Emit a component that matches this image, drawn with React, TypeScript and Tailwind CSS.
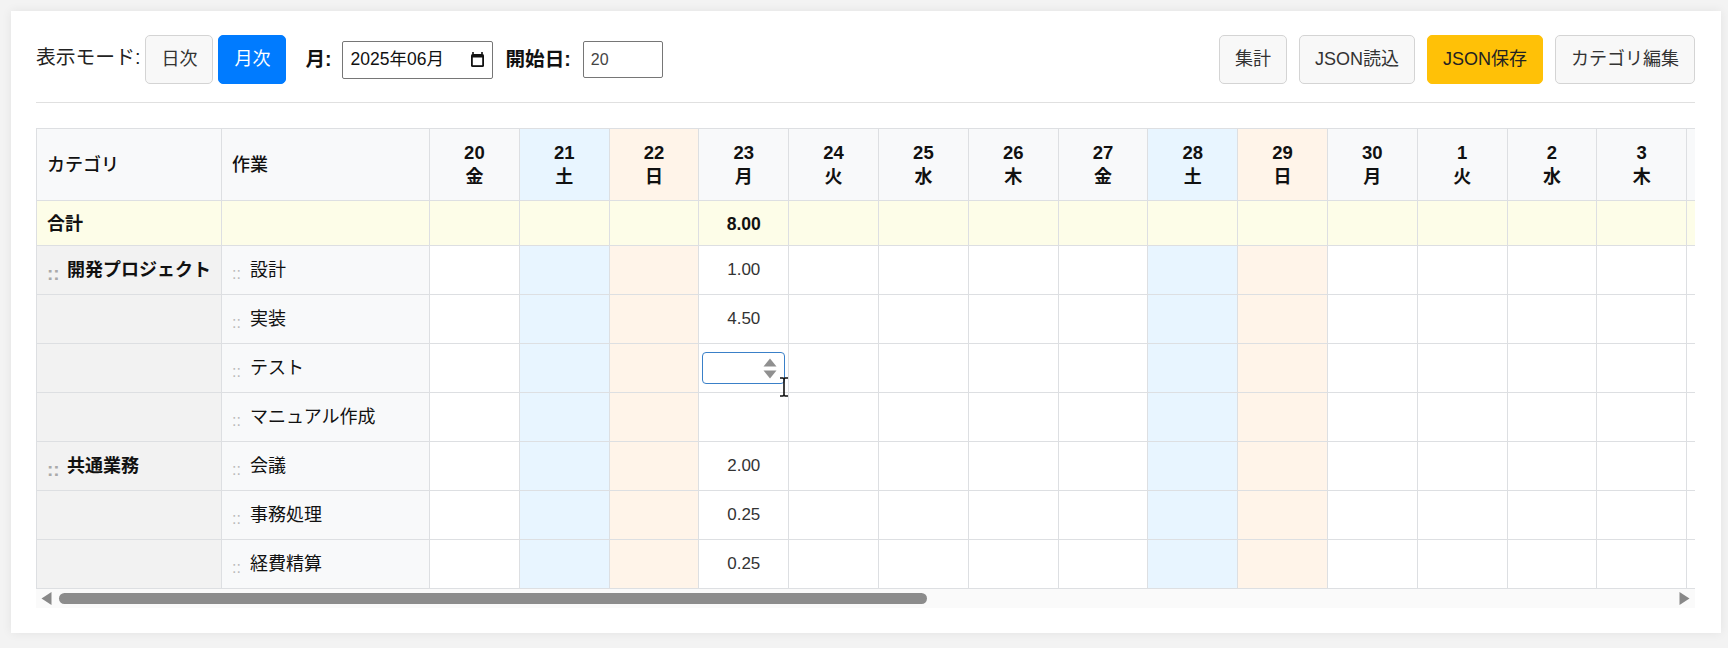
import React from "react";

const days: [number | null, string][] = [
  [20, "金"], [21, "土"], [22, "日"], [23, "月"], [24, "火"], [25, "水"], [26, "木"], [27, "金"], [28, "土"], [29, "日"], [30, "月"],
  [1, "火"], [2, "水"], [3, "木"], [null, ""],
];

const rows: { cat?: string; task: string; val?: string; focus?: boolean }[] = [
  { cat: "開発プロジェクト", task: "設計", val: "1.00" },
  { task: "実装", val: "4.50" },
  { task: "テスト", focus: true },
  { task: "マニュアル作成" },
  { cat: "共通業務", task: "会議", val: "2.00" },
  { task: "事務処理", val: "0.25" },
  { task: "経費精算", val: "0.25" },
];

const cellBase = "border border-[#dddfe2] p-0";

function dayBg(d: string, fallback: string) {
  if (d === "土") return "bg-[#e8f5ff]";
  if (d === "日") return "bg-[#fff4e9]";
  return fallback;
}

function Btn({ children, kind = "plain" }: { children: React.ReactNode; kind?: "plain" | "blue" | "yellow" }) {
  const look =
    kind === "blue"
      ? "bg-[#007bff] text-white border-[#007bff]"
      : kind === "yellow"
        ? "bg-[#ffc107] text-[#222] border-[#ffc107]"
        : "bg-[#f8f8f8] text-[#333] border-[#d4d4d4]";
  return (
    <button className={`h-[49px] px-[15px] border rounded-[5px] text-[18px] whitespace-nowrap ${look}`}>{children}</button>
  );
}

function CalendarIcon() {
  return (
    <svg width="15" height="17" viewBox="0 0 15 17" className="block">
      <path d="M3 1v2M12 1v2" stroke="#111" strokeWidth="1.6" />
      <rect x="1" y="3" width="13" height="13" rx="1.5" fill="#111" />
      <rect x="2.8" y="6.5" width="9.4" height="7.7" fill="#fff" />
    </svg>
  );
}

function Spinner() {
  return (
    <svg width="14" height="21" viewBox="0 0 14 21" className="block">
      <path d="M7 0.5 L13.5 8.5 H0.5 Z M0.5 12.5 H13.5 L7 20.5 Z" fill="#909090" />
    </svg>
  );
}

function IBeam() {
  return (
    <svg width="10" height="20" viewBox="0 0 10 20" className="absolute left-[80px] top-[33px] z-10">
      <path d="M1 1h3l1 1 1-1h3M5 2v16M1 19h3l1-1 1 1h3" stroke="#111" strokeWidth="1.6" fill="none" />
    </svg>
  );
}

export default function App() {
  return (
    <div className="min-h-[648px] bg-[#f3f3f3] pt-[11px] pb-[15px] pl-[11px] pr-[7px] font-['Liberation_Sans','Noto_Sans_CJK_JP',sans-serif] text-[18px] text-[#111]">
      <div className="bg-white pt-[24px] pb-[25px] pl-[25px] pr-[26px] shadow-[0_0_10px_rgba(0,0,0,0.07)]">
        <div className="flex items-center justify-between pb-[18px] border-b border-[#e0e0e0]">
          <div className="flex items-center">
            <span className="mr-[5px] -mt-[4px] text-[19.8px] text-[#222]">表示モード:</span>
            <div className="flex gap-[5px]">
              <Btn>日次</Btn>
              <Btn kind="blue">月次</Btn>
            </div>
            <label className="ml-[19px] mr-[10px] text-[19.6px] font-bold">月:</label>
            <div className="flex h-[38px] w-[151px] items-center justify-between rounded-[2px] border border-[#767676] pl-[8px] pr-[7px] text-[17.5px]">
              <span>2025年06月</span>
              <CalendarIcon />
            </div>
            <label className="ml-[13px] mr-[12px] text-[19.6px] font-bold">開始日:</label>
            <input
              type="number"
              readOnly
              value="20"
              className="h-[37px] w-[80px] rounded-[2px] border border-[#767676] px-[7px] text-[16px] text-[#444]"
            />
          </div>
          <div className="flex items-center gap-[12px]">
            <Btn>集計</Btn>
            <Btn>JSON読込</Btn>
            <Btn kind="yellow">JSON保存</Btn>
            <Btn>カテゴリ編集</Btn>
          </div>
        </div>

        <div className="mt-[25px] overflow-hidden">
          <table className="table-fixed w-[1740px] border-collapse">
            <colgroup>
              <col className="w-[185px]" />
              <col className="w-[208px]" />
              {days.map((_, i) => (
                <col key={i} className="w-[89.8px]" />
              ))}
            </colgroup>
            <thead>
              <tr className="h-[72px]">
                <th className={`${cellBase} bg-[#f8f9fa] pl-[10px] pt-[2px] text-left font-medium`}>カテゴリ</th>
                <th className={`${cellBase} bg-[#f8f9fa] pl-[10px] pt-[2px] text-left font-medium`}>作業</th>
                {days.map(([n, d], i) => (
                  <th key={i} className={`${cellBase} ${dayBg(d, "bg-[#f8f9fa]")} pt-[1px] text-center text-[18.5px] font-bold leading-[25px]`}>
                    {n !== null && <div>{n}</div>}
                    {n !== null && <div className="text-[18px]">{d}</div>}
                  </th>
                ))}
              </tr>
            </thead>
            <tbody>
              <tr className="h-[45px] bg-[#fdfde8]">
                <td className={`${cellBase} pl-[10px] pt-[2px] font-bold`}>合計</td>
                <td className={cellBase}></td>
                {days.map(([n], i) => (
                  <td key={i} className={`${cellBase} pt-[2px] text-center font-bold text-[17.6px]`}>
                    {n === 23 ? "8.00" : ""}
                  </td>
                ))}
              </tr>
              {rows.map((r, ri) => (
                <tr key={ri} className="h-[49px]">
                  <td className={`${cellBase} bg-[#f2f2f2] pl-[10px] font-bold`}>
                    {r.cat && (
                      <div className="flex items-center whitespace-nowrap">
                        <span className="w-[20px] pt-[7px] text-[19px] font-bold leading-none text-[#aaa]">::</span>
                        <span>{r.cat}</span>
                      </div>
                    )}
                  </td>
                  <td className={`${cellBase} bg-[#f8f9fa] pl-[10px]`}>
                    <div className="flex items-center whitespace-nowrap">
                      <span className="w-[18px] pt-[8px] text-[16px] leading-none text-[#bbb]">::</span>
                      <span>{r.task}</span>
                    </div>
                  </td>
                  {days.map(([n, d], i) => (
                    <td key={i} className={`${cellBase} ${dayBg(d, "bg-white")} relative text-center text-[17px] text-[#333]`}>
                      {n === 23 && r.val}
                      {n === 23 && r.focus && (
                        <>
                          <div className="mx-[3px] flex h-[32px] items-center justify-end rounded-[4px] border border-[#3a80c8] pr-[7px]">
                            <Spinner />
                          </div>
                          <IBeam />
                        </>
                      )}
                    </td>
                  ))}
                </tr>
              ))}
            </tbody>
          </table>
          <div className="flex h-[19px] items-center bg-[#fafafa] pl-[5px] pr-[5px]">
            <svg width="11" height="13" viewBox="0 0 11 13" className="block">
              <path d="M10.5 0 V13 L0.5 6.5 Z" fill="#888" />
            </svg>
            <div className="ml-[7px] h-[11px] w-[868px] rounded-full bg-[#8c8c8c]"></div>
            <svg width="11" height="13" viewBox="0 0 11 13" className="ml-auto block">
              <path d="M0.5 0 V13 L10.5 6.5 Z" fill="#888" />
            </svg>
          </div>
        </div>
      </div>
    </div>
  );
}
